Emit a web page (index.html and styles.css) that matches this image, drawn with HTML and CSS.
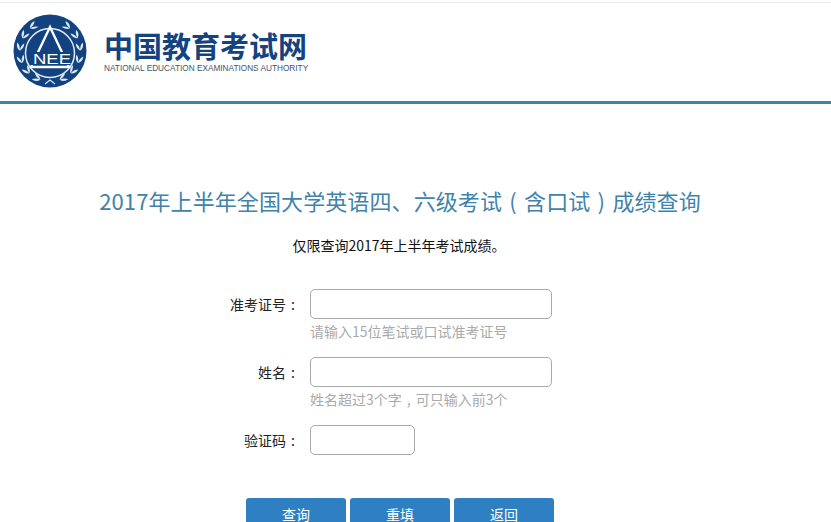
FILE: index.html
```html
<!DOCTYPE html>
<html lang="zh-CN">
<head>
    <meta charset="UTF-8">
    <title>2017年上半年全国大学英语四、六级考试成绩查询</title>
    <link rel="stylesheet" href="styles.css">
</head>
<body>
    <div class="header">
        <svg class="logo" width="74" height="74" viewBox="0 0 74 74">
            <circle cx="37" cy="37" r="36.5" fill="#12427f"/>
            <!-- wreath -->
            <defs>
                <g id="leaf" fill="#dce7f0">
                    <path d="M33 7 Q36 2.5 41 3.5 Q38 7 33 7z"/>
                    <path d="M33 7 Q36 11 41 10.5 Q38 7 33 7z"/>
                </g>
                <g id="wreath">
                    <use href="#leaf" transform="rotate(-34 37 37)"/>
                    <use href="#leaf" transform="rotate(-58 37 37)"/>
                    <use href="#leaf" transform="rotate(-82 37 37)"/>
                    <use href="#leaf" transform="rotate(-106 37 37)"/>
                    <use href="#leaf" transform="rotate(-130 37 37)"/>
                    <use href="#leaf" transform="rotate(-154 37 37)"/>
                </g>
            </defs>
            <use href="#wreath"/>
            <use href="#wreath" transform="translate(74 0) scale(-1 1)"/>
            <circle cx="37" cy="39" r="24.5" fill="#12427f" stroke="#e4ecf3" stroke-width="1.5"/>
            <path d="M18 53 L37 13 L56 53 Z" fill="none" stroke="#fff" stroke-width="2.4" stroke-linejoin="miter"/>
            <rect x="17" y="38" width="40" height="13" fill="#12427f"/>
            <text class="logo-nee" x="20" y="50" textLength="38" lengthAdjust="spacingAndGlyphs">NEE</text>
            <path d="M32 70 L37 66 L42 70" fill="none" stroke="#dce7f0" stroke-width="1.2"/>
        </svg>
        <div class="brand">
            <div class="brand-cn">中国教育考试网</div>
            <div class="brand-en">NATIONAL EDUCATION EXAMINATIONS AUTHORITY</div>
        </div>
    </div>

    <div class="main">
        <h1>2017年上半年全国大学英语四、六级考试<span class="paren">(</span>含口试<span class="paren">)</span>成绩查询</h1>
        <p class="notice">仅限查询2017年上半年考试成绩。</p>

        <form class="query-form">
            <label for="zkzh">准考证号<span class="colon">:</span></label>
            <input type="text" id="zkzh">
            <div class="hint">请输入15位笔试或口试准考证号</div>

            <label for="xm">姓名<span class="colon">:</span></label>
            <input type="text" id="xm">
            <div class="hint">姓名超过3个字<span class="comma">,</span>可只输入前3个</div>

            <label for="yzm">验证码<span class="colon">:</span></label>
            <input type="text" id="yzm" class="short">
        </form>

        <div class="buttons">
            <button type="button">查询</button>
            <button type="button">重填</button>
            <button type="button">返回</button>
        </div>
    </div>
</body>
</html>
```

FILE: styles.css
```css
html, body {
    height: 522px;
    overflow: hidden;
}
body {
    margin: 0;
    background: #fff;
    color: #222;
    font-family: "Noto Sans CJK SC", "Liberation Sans", sans-serif;
    font-size: 14px;
}
.header {
    display: flex;
    align-items: center;
    height: 98px;
    margin-top: 2px;
    padding-left: 13px;
    border-top: 1px solid #eee;
    border-bottom: 3px solid #3f83ab;
}
.logo {
    margin-bottom: 2px;
}
.logo-nee {
    font-family: "Liberation Sans", sans-serif;
    font-size: 15px;
    fill: #fff;
}
.brand {
    margin-left: 17px;
    margin-top: -2px;
}
.brand-cn {
    color: #14437f;
    font-size: 29px;
    font-weight: 700;
    line-height: 34px;
}
.brand-en {
    margin-top: 1px;
    color: #44546a;
    font-family: "Liberation Sans", sans-serif;
    font-size: 8.25px;
    line-height: 12px;
    white-space: nowrap;
}
h1 {
    margin: 80px 0 0;
    padding-right: 31px;
    color: #3f83ab;
    font-size: 22px;
    font-weight: 400;
    letter-spacing: 0.1px;
    line-height: 32px;
    text-align: center;
}
.paren {
    display: inline-block;
    width: 22px;
    text-align: center;
}
.notice {
    margin: 18px 0 0;
    padding-right: 33px;
    color: #111;
    line-height: 22px;
    text-align: center;
}
.query-form {
    display: grid;
    grid-template-columns: 300px 242px;
    column-gap: 10px;
    align-items: center;
    margin-top: 33px;
}
.query-form label {
    text-align: right;
}
.colon {
    display: inline-block;
    width: 14px;
    text-align: center;
}
.query-form input {
    width: 100%;
    height: 30px;
    box-sizing: border-box;
    border: 1px solid #aaa;
    border-radius: 5px;
    background: #fff;
}
.query-form input.short {
    width: 105px;
}
.hint {
    grid-column: 2;
    height: 38px;
    color: #aaa;
    line-height: 24px;
}
.comma {
    display: inline-block;
    width: 14px;
    text-align: center;
}
.buttons {
    display: flex;
    gap: 4px;
    margin-top: 43px;
    padding-left: 246px;
}
.buttons button {
    width: 100px;
    height: 32px;
    border: none;
    border-radius: 3px;
    background: #2f80c3;
    color: #fff;
    font-family: inherit;
    font-size: 14px;
    cursor: pointer;
}
```
